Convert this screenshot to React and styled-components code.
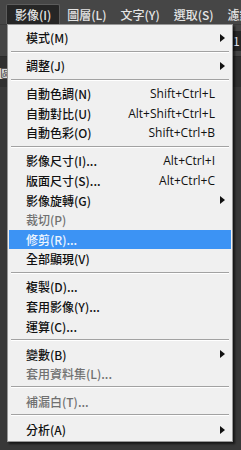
import React from 'react'
import styled, { createGlobalStyle } from 'styled-components';

const Global = createGlobalStyle`
  html, body { margin: 0; padding: 0; background: #3a3a3a; }
  * { box-sizing: border-box; }
`;

const Screen = styled.div`
  position: relative;
  width: 241px;
  height: 450px;
  overflow: hidden;
  background: #383838;
  font-family: "Noto Sans CJK TC", "Noto Sans", sans-serif;
`;

const MenuBar = styled.div`
  height: 24px;
  display: flex;
  align-items: flex-end;
  background: #464646;
  padding-left: 6px;
`;

const BarItem = styled.div`
  height: 20px;
  padding: 0 ${p => (p.$open ? '8px' : '6px')};
  display: flex;
  align-items: center;
  font-size: 12px;
  font-weight: 500;
  color: #e4e4e4;
  white-space: nowrap;
  border: 1px solid ${p => (p.$open ? '#5c5c5c' : 'transparent')};
  border-bottom: none;
  border-radius: 2px 2px 0 0;
  background: ${p => (p.$open ? '#262626' : 'transparent')};
`;

const OptionsBar = styled.div`
  height: 33px;
  display: flex;
  justify-content: flex-end;
  align-items: center;
  background: #444444;
  border-top: 1px solid #3a3a3a;
  border-bottom: 1px solid #2a2a2a;
`;

const NumField = styled.div`
  width: 9px;
  height: 20px;
  background: #262626;
  color: #dfe8ff;
  font-size: 12px;
  line-height: 20px;
  padding-left: 1px;
  overflow: hidden;
`;

const TabRow = styled.div`
  height: 30px;
  display: flex;
  align-items: flex-end;
  background: #2f2f2f;
  padding-bottom: 8px;
`;

const DocTab = styled.div`
  width: 7px;
  height: 11px;
  background: #d8d8d8;
  color: #333;
  font-size: 11px;
  line-height: 11px;
  overflow: hidden;
`;

const Menu = styled.div`
  position: absolute;
  top: 24px;
  left: 7px;
  width: 226px;
  background: #f0f0f0;
  border: 1px solid #979797;
  padding: 3px 1px 2px 1px;
  box-shadow: 2px 2px 2px rgba(0, 0, 0, 0.6);
`;

const Item = styled.div`
  height: 19.6px;
  display: grid;
  grid-template-columns: 1fr auto 16px;
  align-items: center;
  padding-left: 17px;
  font-size: 12px;
  font-weight: 500;
  white-space: nowrap;
  color: ${p => (p.$active ? '#eef5ff' : p.$disabled ? '#707070' : '#111')};
  background: ${p => (p.$active ? '#3c93f4' : 'transparent')};
`;

const Shortcut = styled.span`
  text-align: right;
  font-family: "Open Sans", "Noto Sans", sans-serif;
  font-weight: 500;
`;

const Arrow = styled.svg`
  width: 5px;
  height: 8px;
  margin-left: 5px;
`;

const Separator = styled.div`
  height: 8.4px;
  padding: 3px 2px 0;
  &::before {
    content: '';
    display: block;
    height: 1px;
    background: #a2a2a2;
    border-bottom: 1px solid #ffffff;
    box-sizing: content-box;
  }
`;

const items = [
  { label: '模式(M)', sub: true },
  '-',
  { label: '調整(J)', sub: true },
  '-',
  { label: '自動色調(N)', key: 'Shift+Ctrl+L' },
  { label: '自動對比(U)', key: 'Alt+Shift+Ctrl+L' },
  { label: '自動色彩(O)', key: 'Shift+Ctrl+B' },
  '-',
  { label: '影像尺寸(I)...', key: 'Alt+Ctrl+I' },
  { label: '版面尺寸(S)...', key: 'Alt+Ctrl+C' },
  { label: '影像旋轉(G)', sub: true },
  { label: '裁切(P)', disabled: true },
  { label: '修剪(R)...', active: true },
  { label: '全部顯現(V)' },
  '-',
  { label: '複製(D)...' },
  { label: '套用影像(Y)...' },
  { label: '運算(C)...' },
  '-',
  { label: '變數(B)', sub: true },
  { label: '套用資料集(L)...', disabled: true },
  '-',
  { label: '補漏白(T)...', disabled: true },
  '-',
  { label: '分析(A)', sub: true },
];

export default function App() {
  return (
    <Screen>
      <Global />
      <MenuBar>
        <BarItem $open>影像(I)</BarItem>
        <BarItem>圖層(L)</BarItem>
        <BarItem>文字(Y)</BarItem>
        <BarItem>選取(S)</BarItem>
        <BarItem>濾鏡(T)</BarItem>
      </MenuBar>
      <OptionsBar>
        <NumField>1</NumField>
      </OptionsBar>
      <TabRow>
        <DocTab>區</DocTab>
      </TabRow>
      <Menu>
        {items.map((it, i) =>
          it === '-' ? (
            <Separator key={i} />
          ) : (
            <Item key={i} $active={it.active} $disabled={it.disabled}>
              <span>{it.label}</span>
              <Shortcut>{it.key}</Shortcut>
              {it.sub ? (
                <Arrow viewBox="0 0 5 8">
                  <polygon points="0,0 5,4 0,8" fill="#111" />
                </Arrow>
              ) : (
                <span />
              )}
            </Item>
          )
        )}
      </Menu>
    </Screen>
  );
}
